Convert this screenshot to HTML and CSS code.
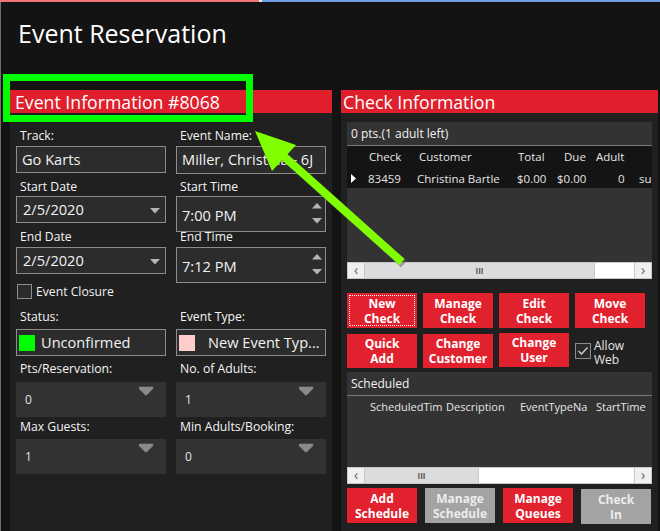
FILE: index.html
```html
<!DOCTYPE html>
<html>
<head>
<meta charset="utf-8">
<link rel="stylesheet" href="styles.css">
</head>
<body>
<div class="app">
  <div class="topstrip"><div class="ts-left"></div><div class="ts-gap"></div><div class="ts-right"></div></div>
  <div class="titlebar"><h1 class="title">Event Reservation</h1></div>
  <div class="main">
    <section class="panel left">
      <div class="phead">Event Information #8068</div>
      <div class="form">
        <div class="lbl r1">Track:</div><div class="lbl r1">Event Name:</div>
        <div class="ctrl"><div class="tbox">Go Karts</div></div>
        <div class="ctrl"><div class="tbox tall">Miller, Christina - 6J</div></div>
        <div class="lbl">Start Date</div><div class="lbl">Start Time</div>
        <div class="ctrl"><div class="tbox date">2/5/2020<svg class="dd" width="10" height="6" viewBox="0 0 10 6"><polygon points="0,0 10,0 5,5.5" fill="#b4b4b4"/></svg></div></div>
        <div class="ctrl"><div class="tbox time">7:00 PM<span class="spin"><svg width="10" height="6" viewBox="0 0 10 6"><polygon points="0,5.5 10,5.5 5,0" fill="#b4b4b4"/></svg><svg width="10" height="6" viewBox="0 0 10 6"><polygon points="0,0 10,0 5,5.5" fill="#b4b4b4"/></svg></span></div></div>
        <div class="lbl">End Date</div><div class="lbl">End Time</div>
        <div class="ctrl"><div class="tbox date">2/5/2020<svg class="dd" width="10" height="6" viewBox="0 0 10 6"><polygon points="0,0 10,0 5,5.5" fill="#b4b4b4"/></svg></div></div>
        <div class="ctrl"><div class="tbox time">7:12 PM<span class="spin"><svg width="10" height="6" viewBox="0 0 10 6"><polygon points="0,5.5 10,5.5 5,0" fill="#b4b4b4"/></svg><svg width="10" height="6" viewBox="0 0 10 6"><polygon points="0,0 10,0 5,5.5" fill="#b4b4b4"/></svg></span></div></div>
        <div class="chkrow"><span class="cbox"></span><span>Event Closure</span></div>
        <div class="lbl">Status:</div><div class="lbl">Event Type:</div>
        <div class="ctrl"><div class="tbox swatch-box"><span class="swatch green"></span>Unconfirmed</div></div>
        <div class="ctrl"><div class="tbox swatch-box"><span class="swatch pink"></span><span class="etype">New Event Typ...</span></div></div>
        <div class="lbl">Pts/Reservation:</div><div class="lbl">No. of Adults:</div>
        <div class="ctrl"><div class="nbox">0<svg class="ntri" width="16" height="10" viewBox="0 0 16 10"><polygon points="2,2 14,2 8,8" fill="#8a8a8a" stroke="#8a8a8a" stroke-width="2.5" stroke-linejoin="round"/></svg></div></div>
        <div class="ctrl"><div class="nbox">1<svg class="ntri" width="16" height="10" viewBox="0 0 16 10"><polygon points="2,2 14,2 8,8" fill="#8a8a8a" stroke="#8a8a8a" stroke-width="2.5" stroke-linejoin="round"/></svg></div></div>
        <div class="lbl">Max Guests:</div><div class="lbl">Min Adults/Booking:</div>
        <div class="ctrl"><div class="nbox">1<svg class="ntri" width="16" height="10" viewBox="0 0 16 10"><polygon points="2,2 14,2 8,8" fill="#8a8a8a" stroke="#8a8a8a" stroke-width="2.5" stroke-linejoin="round"/></svg></div></div>
        <div class="ctrl"><div class="nbox">0<svg class="ntri" width="16" height="10" viewBox="0 0 16 10"><polygon points="2,2 14,2 8,8" fill="#8a8a8a" stroke="#8a8a8a" stroke-width="2.5" stroke-linejoin="round"/></svg></div></div>
      </div>
    </section>
    <section class="panel right">
      <div class="phead">Check Information</div>
      <div class="rbody">
        <div class="grid checks">
          <div class="ghead">0 pts.(1 adult left)</div>
          <div class="gtable">
            <div class="grow hdr"><span class="c-mark"></span><span class="c-check">Check</span><span class="c-cust">Customer</span><span class="c-total">Total</span><span class="c-due">Due</span><span class="c-adult">Adult</span></div>
            <div class="grow"><span class="c-mark"><svg width="6" height="9" viewBox="0 0 6 9"><polygon points="0,0 5,4.5 0,9" fill="#fff"/></svg></span><span class="c-check">83459</span><span class="c-cust">Christina Bartle</span><span class="c-total">$0.00</span><span class="c-due">$0.00</span><span class="c-adult num">0</span><span class="c-su">su</span></div>
          </div>
          <div class="gempty"></div>
          <div class="hscroll"><span class="sbtn">&lsaquo;</span><span class="thumb t1">III</span><span class="track"></span><span class="sbtn">&rsaquo;</span></div>
        </div>
        <div class="btns row1">
          <button class="btn focus"><span>New<br>Check</span></button>
          <button class="btn">Manage<br>Check</button>
          <button class="btn">Edit<br>Check</button>
          <button class="btn">Move<br>Check</button>
        </div>
        <div class="btns row2">
          <button class="btn">Quick<br>Add</button>
          <button class="btn">Change<br>Customer</button>
          <button class="btn up">Change<br>User</button>
          <div class="allow"><span class="cbox checked"><svg width="12" height="10" viewBox="0 0 12 10"><polyline points="1.5,5 4.5,8 10.5,1.5" fill="none" stroke="#d0d0d0" stroke-width="1.3"/></svg></span><span class="allow-t">Allow<br>Web</span></div>
        </div>
        <div class="grid sched">
          <div class="ghead">Scheduled</div>
          <div class="shdr"><span class="s1">ScheduledTim</span><span class="s2">Description</span><span class="s3">EventTypeNa</span><span class="s4">StartTime</span></div>
          <div class="sempty"></div>
          <div class="hscroll"><span class="sbtn">&lsaquo;</span><span class="thumb t2">III</span><span class="track"></span><span class="sbtn">&rsaquo;</span></div>
        </div>
        <div class="btns row3">
          <button class="btn">Add<br>Schedule</button>
          <button class="btn gray">Manage<br>Schedule</button>
          <button class="btn">Manage<br>Queues</button>
          <button class="btn gray low">Check<br>In</button>
        </div>
      </div>
    </section>
  </div>
  <div class="hilite"></div>
  <svg class="arrow" width="660" height="531" viewBox="0 0 660 531">
    <line x1="404" y1="264" x2="281" y2="154" stroke="#555" stroke-opacity="0.5" stroke-width="9"/>
    <line x1="402" y1="262" x2="279" y2="152" stroke="#7fff00" stroke-width="8"/>
    <polygon points="255,131 296,145 272,171" fill="#7fff00"/>
  </svg>
</div>
</body>
</html>
```
FILE: styles.css
```css
* { box-sizing: border-box; }
html, body { margin: 0; padding: 0; }
body {
  width: 660px; height: 531px; overflow: hidden;
  background: #131313;
  font-family: "Open Sans", "Noto Sans", sans-serif;
  color: #f2f2f2;
}
.app { position: relative; width: 660px; height: 531px; border-left: 1px solid #6e6e6e; }
.topstrip { display: flex; height: 2px; margin-left: -1px; }
.ts-left { width: 259px; background: #f07575; }
.ts-gap { width: 3px; background: #e8e8e8; }
.ts-right { flex: 1; background: #6f9de8; }
.titlebar { height: 88px; padding: 15px 0 0 17px; }
.title { margin: 0; font-weight: 400; font-size: 25px; line-height: 32px; color: #fff; }
.main { display: flex; gap: 9px; padding-left: 9px; height: 441px; }
.panel { background: #202020; height: 441px; }
.panel.left { width: 322px; }
.panel.right { width: 317px; }
.phead { background: #e01f2d; height: 23px; font-size: 17.7px; line-height: 24px; padding-left: 5px; color: #fff; white-space: nowrap; }
.panel.right .phead { padding-left: 2px; }

.form {
  display: grid;
  grid-template-columns: 150px 150px;
  column-gap: 10px;
  padding: 16px 0 0 6px;
  grid-template-rows: 17px 34px 16px 34px 17px 36px 27px 19px 33px 20px 38px 19px 35px;
}
.lbl { font-size: 12.2px; line-height: 14px; padding-left: 4px; white-space: nowrap; color: #f4f4f4; }
.ctrl { min-height: 0; }
.tbox {
  position: relative;
  height: 27px; border: 1px solid #8c8c8c; background: #2c2c2c;
  font-size: 14.6px; line-height: 25px; padding-left: 5px; color: #f2f2f2;
  white-space: nowrap; overflow: hidden;
}
.tbox.tall { height: 28px; }
.tbox.date { padding-left: 6px; }
.tbox.time { height: 36px; line-height: 37px; padding-left: 5px; }
.dd { position: absolute; right: 5px; top: 11px; }
.spin { position: absolute; right: 3px; top: 6px; display: flex; flex-direction: column; gap: 9px; }
.spin svg { display: block; }
.chkrow { grid-column: 1 / span 2; display: flex; align-items: center; gap: 4px; font-size: 12.2px; padding-left: 1px; height: 16px; }
.cbox { width: 15px; height: 15px; border: 1px solid #8c8c8c; background: #2c2c2c; display: inline-flex; align-items: center; justify-content: center; }
.swatch-box { display: flex; align-items: center; padding-left: 2px; }
.swatch { width: 16px; height: 16px; margin-right: 6px; flex: none; }
.swatch.green { background: #00ff00; }
.swatch.pink { background: #ffcccc; margin-right: 13px; }
.etype { overflow: hidden; }
.nbox { position: relative; height: 35px; background: #323232; font-size: 12px; line-height: 35px; padding-left: 9px; color: #dde6f4; }
.ntri { position: absolute; right: 12px; top: 4px; }

.rbody { padding: 9px 0 0 6px; }
.grid { width: 305px; background: #333; }
.ghead { height: 24px; border-bottom: 1px solid #7a7a7a; font-size: 12px; line-height: 23px; padding-left: 4px; color: #f2f2f2; }
.gtable { background: #141414; height: 42px; }
.grow { position: relative; height: 21px; font-size: 11.5px; line-height: 21px; color: #e6e6e6; white-space: nowrap; }
.grow.hdr { height: 22px; line-height: 22px; }
.grow span { position: absolute; top: 0; }
.c-mark { left: 4px; }
.c-mark svg { display: block; margin-top: 6px; }
.grow.hdr .c-check { left: 22px; }
.c-check { left: 21px; }
.grow.hdr .c-cust { left: 72px; }
.c-cust { left: 70px; }
.grow.hdr .c-total { left: 171px; }
.c-total { left: 170px; }
.grow.hdr .c-due { left: 217px; }
.c-due { left: 210px; }
.grow.hdr .c-adult { left: 249px; }
.c-adult.num { left: 271px; }
.c-su { left: 292px; }
.gempty { height: 74px; }
.hscroll { display: flex; height: 17px; background: #fff; border: 1px solid #c8c8c8; }
.sbtn { width: 17px; background: #f0f0f0; color: #606060; font-size: 14px; line-height: 13px; text-align: center; border-right: 1px solid #c8c8c8; }
.sbtn:last-child { border-right: 0; border-left: 1px solid #c8c8c8; }
.thumb { background: #dcdcdc; color: #555; font-size: 8px; font-weight: 700; letter-spacing: 0; line-height: 15px; text-align: center; border-right: 1px solid #c8c8c8; }
.thumb.t1 { width: 230px; }
.thumb.t2 { width: 114px; }
.track { flex: 1; }

.btns { display: flex; gap: 6px; }
.btns.row1 { margin-top: 14px; height: 35px; }
.btns.row2 { margin-top: 6px; height: 34px; align-items: flex-start; }
.btn {
  width: 70px; height: 35px; border: 0; padding: 0; margin: 0;
  background: #e1212e; color: #fff;
  font-family: "Open Sans", "Noto Sans", sans-serif; font-weight: 700; font-size: 12px; line-height: 15px;
}
.row2 .btn { height: 34px; }
.row2 .btn.up { margin-top: -1px; }
.btn.focus { padding: 2px; }
.btn.focus span { display: flex; align-items: center; justify-content: center; height: 100%; border: 1px dotted #fff; }
.btn.gray { background: #a3a3a3; color: #ececec; }
.allow { display: flex; align-items: flex-start; gap: 3px; margin-left: 0; padding-top: 5px; }
.allow .cbox { width: 16px; height: 16px; margin-top: 4px; background: #2a2a2a; }
.allow .cbox svg { display: block; }
.allow-t { font-size: 12px; line-height: 14px; color: #e6e6e6; }

.grid.sched { margin-top: 4px; }
.shdr { position: relative; height: 22px; font-size: 11px; line-height: 22px; color: #e6e6e6; white-space: nowrap; }
.shdr span { position: absolute; top: 0; }
.s1 { left: 23px; } .s2 { left: 99px; } .s3 { left: 173px; } .s4 { left: 249px; }
.sempty { height: 49px; }
.btns.row3 { margin-top: 4px; gap: 8px; }
.btn.low { margin-top: 1px; }

.hilite { position: absolute; left: 2px; top: 74px; width: 250px; height: 48px; border: 7px solid #00ff00; }
.arrow { position: absolute; left: -1px; top: 0; pointer-events: none; }
```
